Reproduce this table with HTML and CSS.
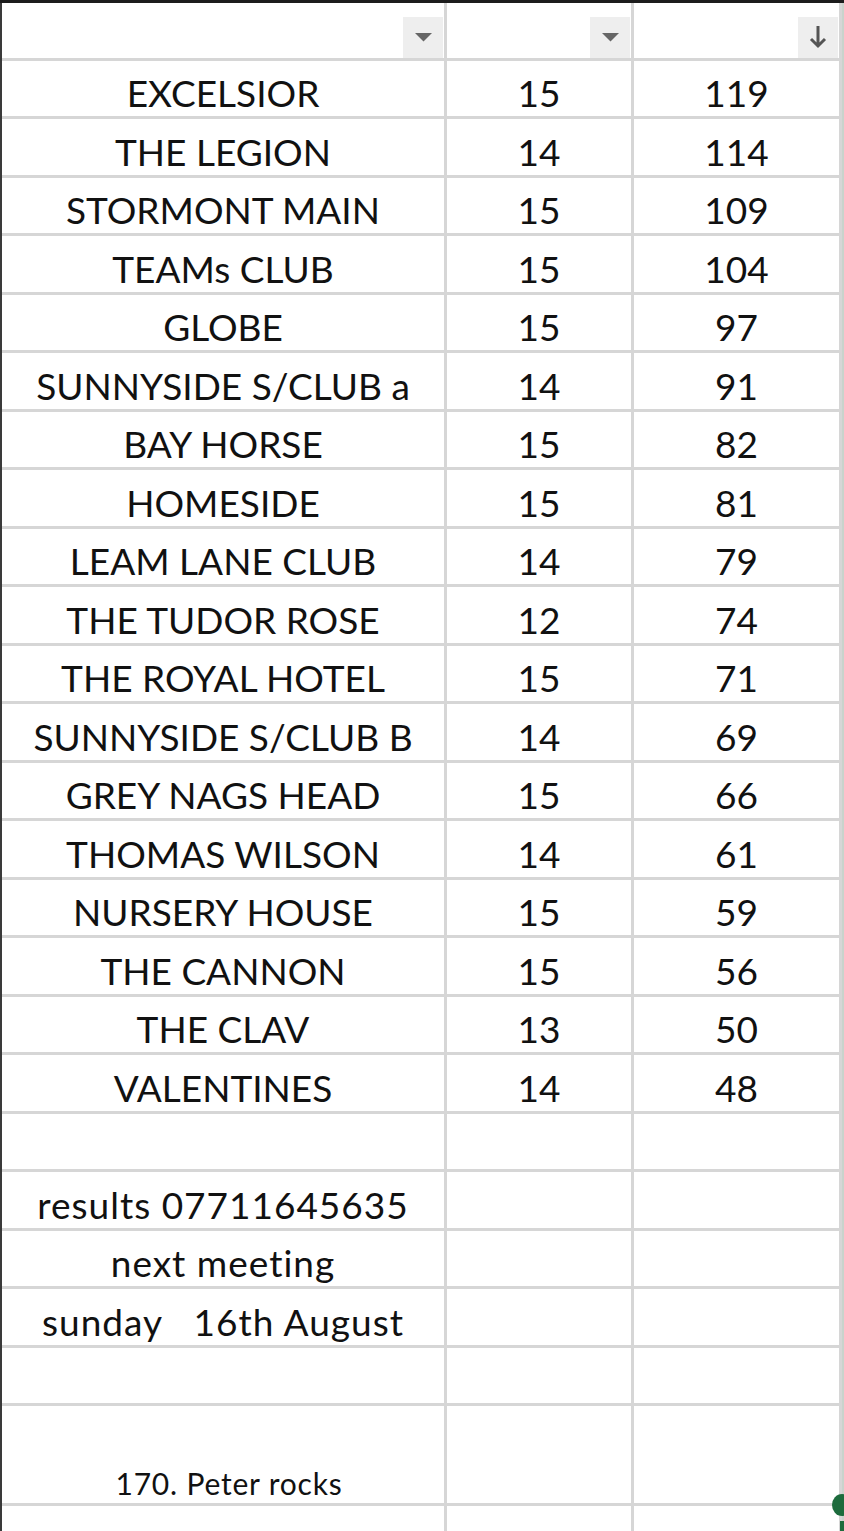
FILE: index.html
```html
<!DOCTYPE html>
<html>
<head>
<meta charset="utf-8">
<link rel="stylesheet" href="styles.css">
</head>
<body>
<div class="topbar"></div>
<div class="sheet">
  <div class="grid">
    <div class="cell head"><span class="filter"><svg width="17" height="9" viewBox="0 0 17 9"><path d="M0 0H17L8.5 8.5Z" fill="#666"/></svg></span></div>
    <div class="cell head"><span class="filter"><svg width="17" height="9" viewBox="0 0 17 9"><path d="M0 0H17L8.5 8.5Z" fill="#666"/></svg></span></div>
    <div class="cell head"><span class="filter"><svg width="20" height="24" viewBox="0 0 20 24"><path d="M10 1V21M3 14L10 21L17 14" fill="none" stroke="#555" stroke-width="3"/></svg></span></div>

    <div class="cell">EXCELSIOR</div><div class="cell">15</div><div class="cell">119</div>
    <div class="cell">THE LEGION</div><div class="cell">14</div><div class="cell">114</div>
    <div class="cell">STORMONT MAIN</div><div class="cell">15</div><div class="cell">109</div>
    <div class="cell">TEAMs CLUB</div><div class="cell">15</div><div class="cell">104</div>
    <div class="cell">GLOBE</div><div class="cell">15</div><div class="cell">97</div>
    <div class="cell">SUNNYSIDE S/CLUB a</div><div class="cell">14</div><div class="cell">91</div>
    <div class="cell">BAY HORSE</div><div class="cell">15</div><div class="cell">82</div>
    <div class="cell">HOMESIDE</div><div class="cell">15</div><div class="cell">81</div>
    <div class="cell">LEAM LANE CLUB</div><div class="cell">14</div><div class="cell">79</div>
    <div class="cell">THE TUDOR ROSE</div><div class="cell">12</div><div class="cell">74</div>
    <div class="cell">THE ROYAL HOTEL</div><div class="cell">15</div><div class="cell">71</div>
    <div class="cell">SUNNYSIDE S/CLUB B</div><div class="cell">14</div><div class="cell">69</div>
    <div class="cell">GREY NAGS HEAD</div><div class="cell">15</div><div class="cell">66</div>
    <div class="cell">THOMAS WILSON</div><div class="cell">14</div><div class="cell">61</div>
    <div class="cell">NURSERY HOUSE</div><div class="cell">15</div><div class="cell">59</div>
    <div class="cell">THE CANNON</div><div class="cell">15</div><div class="cell">56</div>
    <div class="cell">THE CLAV</div><div class="cell">13</div><div class="cell">50</div>
    <div class="cell">VALENTINES</div><div class="cell">14</div><div class="cell">48</div>
    <div class="cell"></div><div class="cell"></div><div class="cell"></div>
    <div class="cell lower">results 07711645635</div><div class="cell"></div><div class="cell"></div>
    <div class="cell lower">next meeting</div><div class="cell"></div><div class="cell"></div>
    <div class="cell lower pre">sunday   16th August</div><div class="cell"></div><div class="cell"></div>
    <div class="cell"></div><div class="cell"></div><div class="cell"></div>
    <div class="cell small">170. Peter rocks</div><div class="cell"></div><div class="cell"></div>
    <div class="cell"></div><div class="cell"></div><div class="cell"></div>
  </div>
  <div class="handle"></div>
  <div class="handle-bar"></div>
</div>
</body>
</html>
```

FILE: styles.css
```css
* { box-sizing: border-box; }
html, body {
  margin: 0;
  padding: 0;
  background: #ffffff;
}
body {
  width: 844px;
  height: 1531px;
  overflow: hidden;
  font-family: Lato, "Open Sans", sans-serif;
  color: #111111;
}
.topbar {
  height: 3px;
  background: #1c1c1c;
}
.sheet {
  position: relative;
  border-left: 2px solid #3a3a3a;
  border-right: 2px solid #c9d3cc;
}
.grid {
  display: grid;
  grid-template-columns: 442px 184px 205px;
  grid-template-rows: 54.5px repeat(23, 55.5px) 96.5px 26px;
  gap: 3px;
  padding-right: 3px;
  background: #d6d6d6;
}
.cell {
  background: #ffffff;
  display: flex;
  justify-content: center;
  align-items: flex-end;
  font-size: 37px;
  line-height: 1;
  padding-bottom: 5px;
  white-space: nowrap;
}
.cell.lower {
  letter-spacing: 1px;
}
.cell.pre {
  white-space: pre;
}
.cell.small {
  font-size: 30px;
  letter-spacing: 0.8px;
  padding-bottom: 5px;
  padding-left: 12px;
}
.cell.head {
  justify-content: flex-end;
  padding: 0;
}
.filter {
  width: 40px;
  height: 41px;
  margin-right: 1px;
  background: #eeeeee;
  display: flex;
  align-items: center;
  justify-content: center;
}
.handle {
  position: absolute;
  right: -10px;
  top: 1491px;
  width: 20px;
  height: 22px;
  border-radius: 50%;
  background: #1d6b3c;
}
.handle-bar {
  position: absolute;
  right: -2px;
  top: 1518px;
  width: 4px;
  height: 20px;
  background: #1d6b3c;
}
```
